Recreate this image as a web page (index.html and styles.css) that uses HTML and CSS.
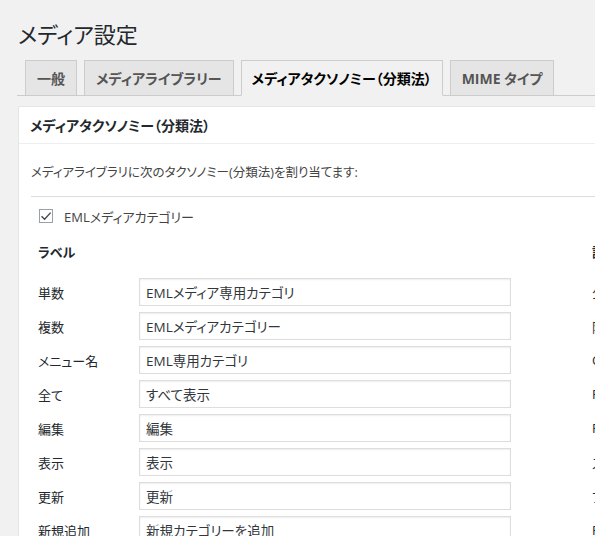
FILE: index.html
```html
<!DOCTYPE html>
<html lang="ja">
<head>
<meta charset="utf-8">
<title>メディア設定</title>
<link rel="stylesheet" href="styles.css">
</head>
<body>
<div class="wrap">
  <h1 class="title">メディア設定</h1>
  <nav class="tabs">
    <a class="tab">一般</a>
    <a class="tab">メディアライブラリー</a>
    <a class="tab active">メディアタクソノミー（分類法）</a>
    <a class="tab">MIME タイプ</a>
  </nav>
  <section class="card">
    <h2 class="card-head">メディアタクソノミー（分類法）</h2>
    <div class="card-body">
      <p class="desc">メディアライブラリに次のタクソノミー(分類法)を割り当てます:</p>
      <div class="sep"></div>
      <label class="check-row">
        <span class="checkbox"><svg width="12" height="12" viewBox="0 0 12 12"><path d="M1.5 6.2 L4.6 9.2 L10.6 2.6" fill="none" stroke="#444" stroke-width="1.3"/></svg></span>
        <span>EMLメディアカテゴリー</span>
      </label>
      <div class="cols">
        <div class="col-left">
          <h3 class="col-title">ラベル</h3>
          <div class="rows">
            <div class="row"><span class="lbl">単数</span><input class="field" type="text" value="EMLメディア専用カテゴリ"></div>
            <div class="row"><span class="lbl">複数</span><input class="field" type="text" value="EMLメディアカテゴリー"></div>
            <div class="row"><span class="lbl">メニュー名</span><input class="field" type="text" value="EML専用カテゴリ"></div>
            <div class="row"><span class="lbl">全て</span><input class="field" type="text" value="すべて表示"></div>
            <div class="row"><span class="lbl">編集</span><input class="field" type="text" value="編集"></div>
            <div class="row"><span class="lbl">表示</span><input class="field" type="text" value="表示"></div>
            <div class="row"><span class="lbl">更新</span><input class="field" type="text" value="更新"></div>
            <div class="row"><span class="lbl">新規追加</span><input class="field" type="text" value="新規カテゴリーを追加"></div>
          </div>
        </div>
        <div class="col-right">
          <h3 class="col-title">設定</h3>
          <div class="rows">
            <div class="row-r">公開</div>
            <div class="row-r">階層あり</div>
            <div class="row-r">Column</div>
            <div class="row-r">Filter</div>
            <div class="row-r">Filter</div>
            <div class="row-r">スラッグ</div>
            <div class="row-r">フロント</div>
            <div class="row-r">Rewrite</div>
          </div>
        </div>
      </div>
    </div>
  </section>
</div>
</body>
</html>
```
FILE: styles.css
```css
html, body {
  margin: 0;
  padding: 0;
  background: #f1f1f1;
  overflow: hidden;
}
body {
  width: 595px;
  height: 536px;
  font-family: "Open Sans", "Noto Sans CJK JP", sans-serif;
  font-feature-settings: "palt";
  color: #444;
  font-size: 13px;
}
.wrap {
  padding: 0 0 0 18px;
  width: 900px;
}
.title {
  margin: 0;
  padding: 19px 0 0 0;
  height: 60px;
  box-sizing: border-box;
  font-size: 22px;
  line-height: 30px;
  font-weight: 400;
  color: #23282d;
}
.tabs {
  display: flex;
  gap: 7px;
  margin: 0 0 0 -1px;
  padding: 0 0 0 8px;
  border-bottom: 1px solid #ccc;
  height: 36px;
  box-sizing: border-box;
}
.tab {
  display: flex;
  align-items: center;
  height: 36px;
  box-sizing: border-box;
  padding: 0 11px;
  border: 1px solid #ccc;
  background: #e5e5e5;
  color: #555;
  font-size: 14px;
  font-weight: 700;
}
.tab.active {
  background: #f1f1f1;
  border-bottom-color: #f1f1f1;
  color: #000;
  height: 36px;
  padding: 0 10px;
}
.card {
  margin-top: 10px;
  background: #fff;
  border: 1px solid #e5e5e5;
  width: 800px;
  box-sizing: border-box;
}
.card-head {
  margin: 0;
  height: 37px;
  box-sizing: border-box;
  border-bottom: 1px solid #eee;
  padding: 0 11px;
  display: flex;
  align-items: center;
  font-size: 14px;
  font-weight: 700;
  color: #23282d;
}
.card-body {
  padding: 0 0 0 12px;
}
.desc {
  margin: 0;
  padding: 19px 0 0;
  height: 52px;
  box-sizing: border-box;
  line-height: 20px;
  font-size: 12.5px;
  color: #444;
}
.sep {
  height: 1px;
  background: #ddd;
}
.check-row {
  display: flex;
  align-items: center;
  gap: 11px;
  height: 38px;
  padding-left: 8px;
  color: #444;
  font-size: 13px;
}
.checkbox {
  width: 14px;
  height: 14px;
  border: 1px solid #9aa0a6;
  display: flex;
  align-items: center;
  justify-content: center;
  box-sizing: border-box;
}
.cols {
  display: flex;
  gap: 81px;
  padding-left: 7px;
}
.col-left {
  width: 473px;
}
.col-title {
  margin: 0 0 10px;
  height: 33px;
  display: flex;
  align-items: center;
  font-size: 13px;
  font-weight: 700;
  color: #23282d;
}
.rows {
  display: flex;
  flex-direction: column;
  gap: 6px;
}
.row {
  display: grid;
  grid-template-columns: 101px 372px;
  align-items: center;
  height: 28px;
}
.lbl {
  color: #23282d;
  font-size: 13px;
}
.field {
  margin: 0;
  width: 372px;
  height: 28px;
  box-sizing: border-box;
  border: 1px solid #ddd;
  box-shadow: inset 0 1px 2px rgba(0,0,0,0.07);
  padding: 0 6px;
  font-family: "Open Sans", "Noto Sans CJK JP", sans-serif;
  font-feature-settings: "palt";
  font-size: 13.5px;
  color: #32373c;
  background: #fff;
}
.row-r {
  height: 28px;
  display: flex;
  align-items: center;
  box-sizing: border-box;
  color: #23282d;
}
```
